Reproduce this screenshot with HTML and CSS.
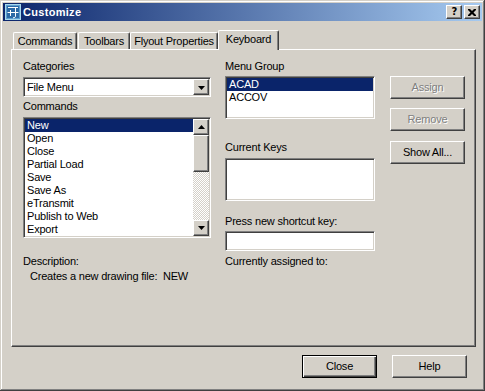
FILE: index.html
```html
<!DOCTYPE html>
<html>
<head>
<meta charset="utf-8">
<title>Customize</title>
<link rel="stylesheet" href="styles.css">
</head>
<body>
<div class="window">
  <div class="titlebar">
    <svg class="app-icon" width="16" height="16" viewBox="0 0 16 16">
      <rect x="0.5" y="0.5" width="15" height="15" fill="#2c6aa6" stroke="#a8d8ec"/>
      <rect x="1.5" y="1.5" width="13" height="13" fill="none" stroke="#5d9fd0"/>
      <path d="M3 3.5h10M10.5 3.5v8.5c0 1.2-0.8 1.8-2.5 1.8M2.5 8.5h11M5.5 6v6" stroke="#ffffff" fill="none"/>
    </svg>
    <span class="title">Customize</span>
    <div class="caption-btns">
      <div class="cap-btn cap-help">?</div>
      <div class="cap-btn cap-close">
        <svg width="8" height="7" viewBox="0 0 8 7"><path d="M0 0h2l2 2 2-2h2v1l-2.5 2.5 2.5 2.5v1h-2l-2-2-2 2h-2v-1l2.5-2.5-2.5-2.5z" fill="#000"/></svg>
      </div>
    </div>
  </div>

  <div class="client">
    <div class="tabs">
      <div class="tab tab-commands">Commands</div>
      <div class="tab tab-toolbars">Toolbars</div>
      <div class="tab tab-flyout">Flyout Properties</div>
      <div class="tab tab-keyboard active">Keyboard</div>
    </div>

    <div class="panel">
      <div class="col-left">
        <div class="label">Categories</div>
        <div class="combo sunken">
          <span class="combo-text">File Menu</span>
          <div class="raised drop-btn">
            <svg width="7" height="4" viewBox="0 0 7 4"><path d="M0 0h7l-3.5 4z" fill="#000"/></svg>
          </div>
        </div>
        <div class="label lbl-commands">Commands</div>
        <div class="listbox sunken cmd-list">
          <div class="rows">
            <div class="row sel">New</div>
            <div class="row">Open</div>
            <div class="row">Close</div>
            <div class="row">Partial Load</div>
            <div class="row">Save</div>
            <div class="row">Save As</div>
            <div class="row">eTransmit</div>
            <div class="row">Publish to Web</div>
            <div class="row">Export</div>
          </div>
          <div class="vscroll">
            <div class="raised sb-btn">
              <svg width="7" height="4" viewBox="0 0 7 4"><path d="M3.5 0l3.5 4h-7z" fill="#000"/></svg>
            </div>
            <div class="raised sb-thumb"></div>
            <div class="sb-track"></div>
            <div class="raised sb-btn">
              <svg width="7" height="4" viewBox="0 0 7 4"><path d="M0 0h7l-3.5 4z" fill="#000"/></svg>
            </div>
          </div>
        </div>
        <div class="label lbl-desc">Description:</div>
        <div class="desc">Creates a new drawing file:&nbsp; NEW</div>
      </div>

      <div class="col-right">
        <div class="label">Menu Group</div>
        <div class="listbox sunken group-list">
          <div class="rows">
            <div class="row sel">ACAD</div>
            <div class="row">ACCOV</div>
          </div>
        </div>
        <div class="label lbl-keys">Current Keys</div>
        <div class="sunken keys-box"></div>
        <div class="label lbl-press">Press new shortcut key:</div>
        <div class="sunken key-input"></div>
        <div class="label lbl-assigned">Currently assigned to:</div>
      </div>

      <div class="col-btns">
        <div class="btn raised disabled">Assign</div>
        <div class="btn raised disabled">Remove</div>
        <div class="btn raised btn-showall">Show All...</div>
      </div>
    </div>

    <div class="footer">
      <div class="btn default">Close</div>
      <div class="btn raised">Help</div>
    </div>
  </div>
</div>
</body>
</html>
```
FILE: styles.css
```css
* { box-sizing: border-box; }

html, body {
  margin: 0;
  padding: 0;
  background: #d4d0c8;
}

body {
  font-family: "Liberation Sans", Arial, sans-serif;
  font-size: 11px;
  line-height: 13px;
  letter-spacing: -0.2px;
  color: #000;
}

.window {
  width: 485px;
  height: 391px;
  padding: 3px;
  background: #d4d0c8;
  box-shadow: inset -1px -1px #404040, inset 1px 1px #d4d0c8,
              inset -2px -2px #808080, inset 2px 2px #ffffff;
  display: flex;
  flex-direction: column;
}

/* ---------- title bar ---------- */
.titlebar {
  height: 18px;
  flex: none;
  display: flex;
  align-items: center;
  padding: 0 2px 0 2px;
  background: linear-gradient(to right, #0a246a, #a6caf0);
}

.app-icon { flex: none; display: block; }

.title {
  margin-left: 2px;
  color: #fff;
  font-weight: bold;
  font-size: 11px;
  letter-spacing: 0.3px;
}

.caption-btns {
  margin-left: auto;
  display: flex;
  gap: 2px;
}

.cap-btn {
  width: 16px;
  height: 14px;
  background: #d4d0c8;
  border: 1px solid;
  border-color: #fff #404040 #404040 #fff;
  box-shadow: inset -1px -1px #808080;
  display: flex;
  align-items: center;
  justify-content: center;
}

.cap-help {
  font-family: "DejaVu Sans", sans-serif;
  font-weight: bold;
  font-size: 10px;
  line-height: 10px;
  letter-spacing: 0;
  padding-left: 1px;
}

.cap-close svg { display: block; }

/* ---------- client ---------- */
.client {
  flex: 1;
  display: flex;
  flex-direction: column;
  padding: 9px 6px 0 8px;
}

.tabs {
  height: 19px;
  display: flex;
  align-items: flex-end;
  padding-left: 2px;
}

.tab {
  height: 17px;
  padding-top: 2px;
  text-align: center;
  white-space: nowrap;
  background: #d4d0c8;
  border-top: 1px solid #fff;
  border-left: 1px solid #fff;
  border-right: 1px solid #404040;
  box-shadow: inset -1px 0 #808080;
  border-top-left-radius: 2px;
  border-top-right-radius: 2px;
}

.tab-commands { width: 64px; }
.tab-toolbars { width: 52px; margin-left: 1px; }
.tab-flyout { width: 88px; }

.tab.active {
  width: 61px;
  height: 20px;
  margin-bottom: -1px;
  position: relative;
  z-index: 1;
  padding-top: 2px;
}

.panel {
  height: 298px;
  flex: none;
  display: flex;
  padding: 10px 0 0 11px;
  border: 1px solid;
  border-color: #fff #404040 #404040 #fff;
  box-shadow: inset -1px -1px #808080;
}

.label { height: 13px; white-space: nowrap; }

/* 3D borders */
.sunken {
  border: 1px solid;
  border-color: #808080 #fff #fff #808080;
  box-shadow: inset 1px 1px #404040, inset -1px -1px #d4d0c8;
  background: #fff;
  padding: 1px;
}

.raised {
  background: #d4d0c8;
  border: 1px solid;
  border-color: #fff #404040 #404040 #fff;
  box-shadow: inset -1px -1px #808080;
}

/* ---------- left column ---------- */
.col-left {
  width: 188px;
  flex: none;
  display: flex;
  flex-direction: column;
}

.combo {
  margin-top: 4px;
  height: 20px;
  display: flex;
}

.combo-text {
  flex: 1;
  padding-left: 2px;
  line-height: 16px;
}

.drop-btn {
  width: 16px;
  height: 16px;
  display: flex;
  align-items: center;
  justify-content: center;
  padding-top: 1px;
}

.drop-btn svg, .sb-btn svg { display: block; }

.lbl-commands { margin-top: 3px; }

.listbox { display: flex; }

.cmd-list {
  margin-top: 4px;
  height: 121px;
}

.rows { flex: 1; }

.row {
  height: 13px;
  padding-left: 2px;
  white-space: nowrap;
}

.row.sel {
  background: #0a246a;
  color: #fff;
}

.vscroll {
  width: 16px;
  display: flex;
  flex-direction: column;
}

.sb-btn {
  width: 16px;
  height: 16px;
  flex: none;
  display: flex;
  align-items: center;
  justify-content: center;
}

.sb-thumb {
  height: 37px;
  flex: none;
}

.sb-track {
  flex: 1;
  background: repeating-conic-gradient(#ffffff 0 25%, #d4d0c8 0 50%) 0 0 / 2px 2px;
}

.lbl-desc { margin-top: 17px; }

.desc {
  margin-top: 2px;
  padding-left: 7px;
  white-space: nowrap;
}

/* ---------- right column ---------- */
.col-right {
  width: 150px;
  flex: none;
  margin-left: 14px;
  display: flex;
  flex-direction: column;
}

.group-list {
  margin-top: 3px;
  height: 43px;
}

.lbl-keys { margin-top: 22px; }

.keys-box {
  margin-top: 4px;
  height: 43px;
}

.lbl-press { margin-top: 14px; }

.key-input {
  margin-top: 3px;
  height: 20px;
}

.lbl-assigned { margin-top: 4px; }

/* ---------- buttons ---------- */
.col-btns {
  width: 75px;
  flex: none;
  margin-left: 15px;
  margin-top: 16px;
  display: flex;
  flex-direction: column;
  gap: 9px;
}

.btn {
  width: 75px;
  height: 23px;
  display: flex;
  align-items: center;
  justify-content: center;
  white-space: nowrap;
}

.btn.disabled {
  color: #808080;
  text-shadow: 1px 1px #fff;
}

.btn-showall { margin-top: 1px; }

.footer {
  margin-top: 8px;
  display: flex;
  justify-content: flex-end;
  gap: 15px;
  padding-right: 9px;
}

.btn.default {
  background: #d4d0c8;
  border: 1px solid #000;
  box-shadow: inset 1px 1px #fff, inset -1px -1px #404040, inset -2px -2px #808080;
}
```
